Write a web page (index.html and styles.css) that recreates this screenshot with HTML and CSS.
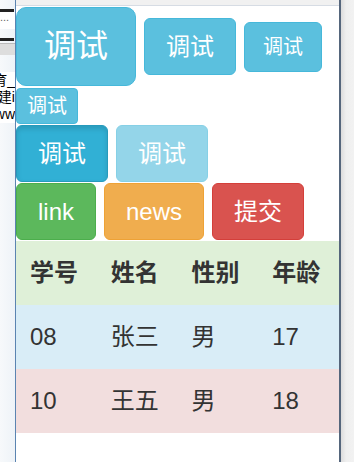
FILE: index.html
```html
<!DOCTYPE html>
<html lang="zh-CN">
<head>
  <meta charset="UTF-8" />
  <title>按钮调试</title>
  <link rel="stylesheet" href="styles.css">
</head>
<body>

  <div class="screen">
    <!-- page behind the device frame -->
    <div class="behind">
      <div class="behind-bar"></div>
      <div class="behind-dots">...</div>
      <div class="behind-bar"></div>
      <div class="behind-input"></div>
      <p class="behind-text">教育_</p>
      <p class="behind-text">基建i</p>
      <p class="behind-text">www</p>
    </div>

    <div class="device">
      <div class="device-top"></div>

      <div class="btn-row first">
        <button class="btn btn-info btn-xl">调试</button>
        <button class="btn btn-info btn-lg">调试</button>
        <button class="btn btn-info btn-md">调试</button>
        <button class="btn btn-info btn-sm">调试</button>
      </div>

      <div class="btn-row">
        <button class="btn btn-info btn-lg active">调试</button>
        <button class="btn btn-info btn-lg" disabled>调试</button>
      </div>

      <div class="btn-row">
        <button class="btn btn-success btn-lg">link</button>
        <button class="btn btn-warning btn-lg">news</button>
        <button class="btn btn-danger btn-lg">提交</button>
      </div>

      <table class="table">
        <tr class="success">
          <th>学号</th>
          <th>姓名</th>
          <th>性别</th>
          <th>年龄</th>
        </tr>
        <tr class="info">
          <td>08</td>
          <td>张三</td>
          <td>男</td>
          <td>17</td>
        </tr>
        <tr class="danger">
          <td>10</td>
          <td>王五</td>
          <td>男</td>
          <td>18</td>
        </tr>
      </table>
    </div>

    <div class="side"></div>
  </div>

</body>
</html>
```

FILE: styles.css
```css
body {
  margin: 0;
  font-family: "Liberation Sans", "Noto Sans CJK SC", sans-serif;
  color: #333;
  background: #fff;
}

.screen {
  display: flex;
  height: 462px;
  overflow: hidden;
}

/* page behind */
.behind {
  flex: 0 0 15px;
  overflow: hidden;
  background: linear-gradient(to right, #f7f9fb, #eef3f8);
  font-size: 14px;
  color: #000;
}

.behind-bar {
  height: 3px;
  margin-top: 9px;
  background: #222;
  width: 14px;
}

.behind-dots {
  height: 17px;
  line-height: 10px;
  color: #666;
  font-size: 11px;
  background: #fff;
}

.behind-input {
  height: 11px;
  margin-top: 2px;
  background: #ddd;
  border-top: 1px solid #bbb;
}

.behind-text {
  margin: 0;
  width: 40px;
  margin-left: -25px;
  text-align: right;
  white-space: nowrap;
  line-height: 17px;
  background: #fff;
}

.behind-text:first-of-type {
  margin-top: 17px;
}

/* device frame */
.device {
  flex: 0 0 323px;
  border-left: 1px solid #5b84b1;
  border-right: 2px solid #55667c;
  background: #fff;
}

.device-top {
  height: 5px;
  background: #f1f1f1;
  border-bottom: 1px solid #d6dce4;
}

.side {
  flex: 1;
  background: linear-gradient(to right, #dcdcdc, #efefef 5px, #f2f2f2);
}

/* buttons */
.btn-row {
  display: flex;
  flex-wrap: wrap;
  align-items: center;
  column-gap: 8px;
  row-gap: 2px;
  margin-top: 1px;
}

.btn {
  font-family: "Liberation Sans", "Noto Sans CJK SC", sans-serif;
  color: #fff;
  border: 1px solid transparent;
  cursor: pointer;
  white-space: nowrap;
}

.btn-xl {
  font-size: 32px;
  line-height: 43px;
  padding: 17px 27px;
  border-radius: 10px;
}

.btn-lg {
  font-size: 24px;
  line-height: 33px;
  padding: 11px 21px;
  border-radius: 6px;
}

.btn-md {
  font-size: 20px;
  line-height: 28px;
  padding: 10px 18px;
  border-radius: 6px;
}

.btn-sm {
  font-size: 20px;
  line-height: 28px;
  padding: 3px 10px;
  border-radius: 4px;
}

.btn-info {
  background-color: #5bc0de;
  border-color: #46b8da;
}

.btn-info.active {
  background-color: #31b0d5;
  border-color: #269abc;
  box-shadow: inset 0 3px 5px rgba(0, 0, 0, 0.125);
}

.btn[disabled] {
  opacity: 0.65;
  cursor: not-allowed;
}

.btn-success {
  background-color: #5cb85c;
  border-color: #4cae4c;
}

.btn-warning {
  background-color: #f0ad4e;
  border-color: #eea236;
}

.btn-danger {
  background-color: #d9534f;
  border-color: #d43f3a;
}

/* table */
.table {
  width: 100%;
  border-collapse: collapse;
  margin-top: 1px;
  font-size: 24px;
}

.table th,
.table td {
  padding: 15px 15px 15px 14px;
  line-height: 34px;
  text-align: left;
}

.table th {
  font-weight: bold;
}

.table tr.success {
  background-color: #dff0d8;
}

.table tr.info {
  background-color: #d9edf7;
}

.table tr.danger {
  background-color: #f2dede;
}
```
